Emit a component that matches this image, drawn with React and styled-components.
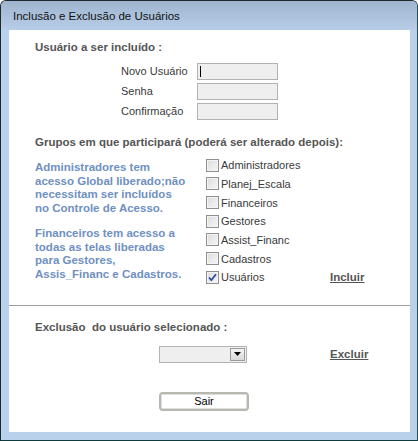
import React, { useState } from "react";
import styled, { createGlobalStyle } from "styled-components";

const GlobalStyle = createGlobalStyle`
  html, body {
    margin: 0;
    padding: 0;
    background: #ffffff;
  }
  body {
    font-family: "Liberation Sans", Arial, sans-serif;
  }
`;

const Window = styled.div`
  width: 418px;
  height: 441px;
  box-sizing: border-box;
  border: 1px solid #1c2a2e;
  border-bottom-color: #0f3b3f;
  border-right-color: #2a4f55;
  border-radius: 6px 6px 0 0;
  background: #bad1eb;
  display: flex;
  flex-direction: column;
  overflow: hidden;
`;

const TitleBar = styled.div`
  height: 29px;
  flex: none;
  display: flex;
  align-items: center;
  padding-left: 12px;
  background: linear-gradient(#9fb4cf, #b7cde8);
  font-size: 11.5px;
  color: #111;
`;

const Client = styled.div`
  flex: 1;
  margin: 0 7px 8px 8px;
  background: #ffffff;
  display: flex;
  flex-direction: column;
`;

const Section = styled.div`
  padding-left: 26px;
  padding-top: ${({ top }) => top || 0}px;
`;

const Heading = styled.div`
  font-weight: bold;
  font-size: 11.5px;
  line-height: 14px;
  color: #555555;
  white-space: pre;
`;

const Form = styled.div`
  display: grid;
  grid-template-columns: 76px 81px;
  grid-auto-rows: 17px;
  row-gap: 3px;
  margin: 9px 0 0 86px;
`;

const Label = styled.div`
  font-size: 11px;
  line-height: 17px;
  color: #3a3a3a;
`;

const Field = styled.div`
  box-sizing: border-box;
  height: 17px;
  background: #efefef;
  border: 1px solid #b2b2b2;
  position: relative;
`;

const Caret = styled.span`
  position: absolute;
  left: 2px;
  top: 2px;
  width: 1px;
  height: 11px;
  background: #000;
`;

const Groups = styled.div`
  display: grid;
  grid-template-columns: 171px 124px auto;
  margin-top: 7px;
`;

const Note = styled.div`
  padding-top: 5px;
  font-weight: bold;
  font-size: 11.5px;
  line-height: 13.5px;
  color: #7090c2;
  p {
    margin: 0 0 12px 0;
  }
  p:last-child {
    margin-bottom: 0;
  }
`;

const CheckList = styled.div`
  display: grid;
  grid-auto-rows: 18.67px;
`;

const CheckRow = styled.label`
  display: flex;
  align-items: center;
  gap: 2px;
  font-size: 11px;
  color: #3a3a3a;
  cursor: pointer;
`;

const Box = styled.span`
  width: 13px;
  height: 13px;
  box-sizing: border-box;
  border: 1px solid #8e8f8f;
  background: linear-gradient(135deg, #dcdcdc, #f6f6f6);
  box-shadow: inset 0 0 0 1px #f4f4f4;
  display: flex;
  align-items: center;
  justify-content: center;
  flex: none;
`;

const LinkAction = styled.a`
  font-weight: bold;
  font-size: 11.5px;
  line-height: 14px;
  color: #555555;
  text-decoration: underline;
  cursor: pointer;
  align-self: ${({ end }) => (end ? "end" : "center")};
  margin-bottom: ${({ end }) => (end ? 3 : 0)}px;
`;

const Divider = styled.div`
  height: 1px;
  background: #9c9c9c;
  margin-top: 18px;
`;

const DeleteRow = styled.div`
  display: grid;
  grid-template-columns: 171px auto;
  align-items: center;
  margin: 12px 0 0 124px;
`;

const Combo = styled.div`
  box-sizing: border-box;
  width: 88px;
  height: 17px;
  background: #efefef;
  border: 1px solid #b2b2b2;
  display: flex;
  justify-content: flex-end;
  padding: 1px;
`;

const ComboArrow = styled.span`
  box-sizing: border-box;
  width: 15px;
  height: 13px;
  border: 1px solid #9a9a9a;
  background: linear-gradient(#f4f4f4, #d8d8d8);
  display: flex;
  align-items: center;
  justify-content: center;
`;

const ExitButton = styled.button`
  box-sizing: border-box;
  width: 90px;
  height: 19px;
  margin: 29px 0 0 124px;
  padding: 0;
  border: 2px solid #b8b8b0;
  border-radius: 4px;
  background: #ffffff;
  box-shadow: inset 0 0 0 1px #dedede;
  font-family: "Liberation Sans", Arial, sans-serif;
  font-size: 11px;
  color: #000;
  cursor: pointer;
`;

const groups = [
  "Administradores",
  "Planej_Escala",
  "Financeiros",
  "Gestores",
  "Assist_Financ",
  "Cadastros",
  "Usuários",
];

export default function App() {
  const [checked, setChecked] = useState({ "Usuários": true });

  return (
    <>
      <GlobalStyle />
      <Window>
        <TitleBar>Inclusão e Exclusão de Usuários</TitleBar>
        <Client>
          <Section top={10}>
            <Heading>Usuário a ser incluído :</Heading>
            <Form>
              <Label>Novo Usuário</Label>
              <Field>
                <Caret />
              </Field>
              <Label>Senha</Label>
              <Field />
              <Label>Confirmação</Label>
              <Field />
            </Form>
          </Section>
          <Section top={15}>
            <Heading>Grupos em que participará (poderá ser alterado depois):</Heading>
            <Groups>
              <Note>
                <p>
                  Administradores tem
                  <br />
                  acesso Global liberado;não
                  <br />
                  necessitam ser incluídos
                  <br />
                  no Controle de Acesso.
                </p>
                <p>
                  Financeiros tem acesso a
                  <br />
                  todas as telas liberadas
                  <br />
                  para Gestores,
                  <br />
                  Assis_Financ e Cadastros.
                </p>
              </Note>
              <CheckList>
                {groups.map((g) => (
                  <CheckRow
                    key={g}
                    onClick={() => setChecked({ ...checked, [g]: !checked[g] })}
                  >
                    <Box>
                      {checked[g] && (
                        <svg width="9" height="9" viewBox="0 0 9 9">
                          <path
                            d="M1 4.5 L3.3 7.2 L8 1.2"
                            fill="none"
                            stroke="#2a4aa8"
                            strokeWidth="1.8"
                          />
                        </svg>
                      )}
                    </Box>
                    {g}
                  </CheckRow>
                ))}
              </CheckList>
              <LinkAction end>Incluir</LinkAction>
            </Groups>
          </Section>
          <Divider />
          <Section top={14}>
            <Heading>{"Exclusão  do usuário selecionado :"}</Heading>
            <DeleteRow>
              <Combo>
                <ComboArrow>
                  <svg width="7" height="4" viewBox="0 0 7 4">
                    <path d="M0 0 H7 L3.5 4 Z" fill="#000" />
                  </svg>
                </ComboArrow>
              </Combo>
              <LinkAction>Excluir</LinkAction>
            </DeleteRow>
            <ExitButton>Sair</ExitButton>
          </Section>
        </Client>
      </Window>
    </>
  );
}
